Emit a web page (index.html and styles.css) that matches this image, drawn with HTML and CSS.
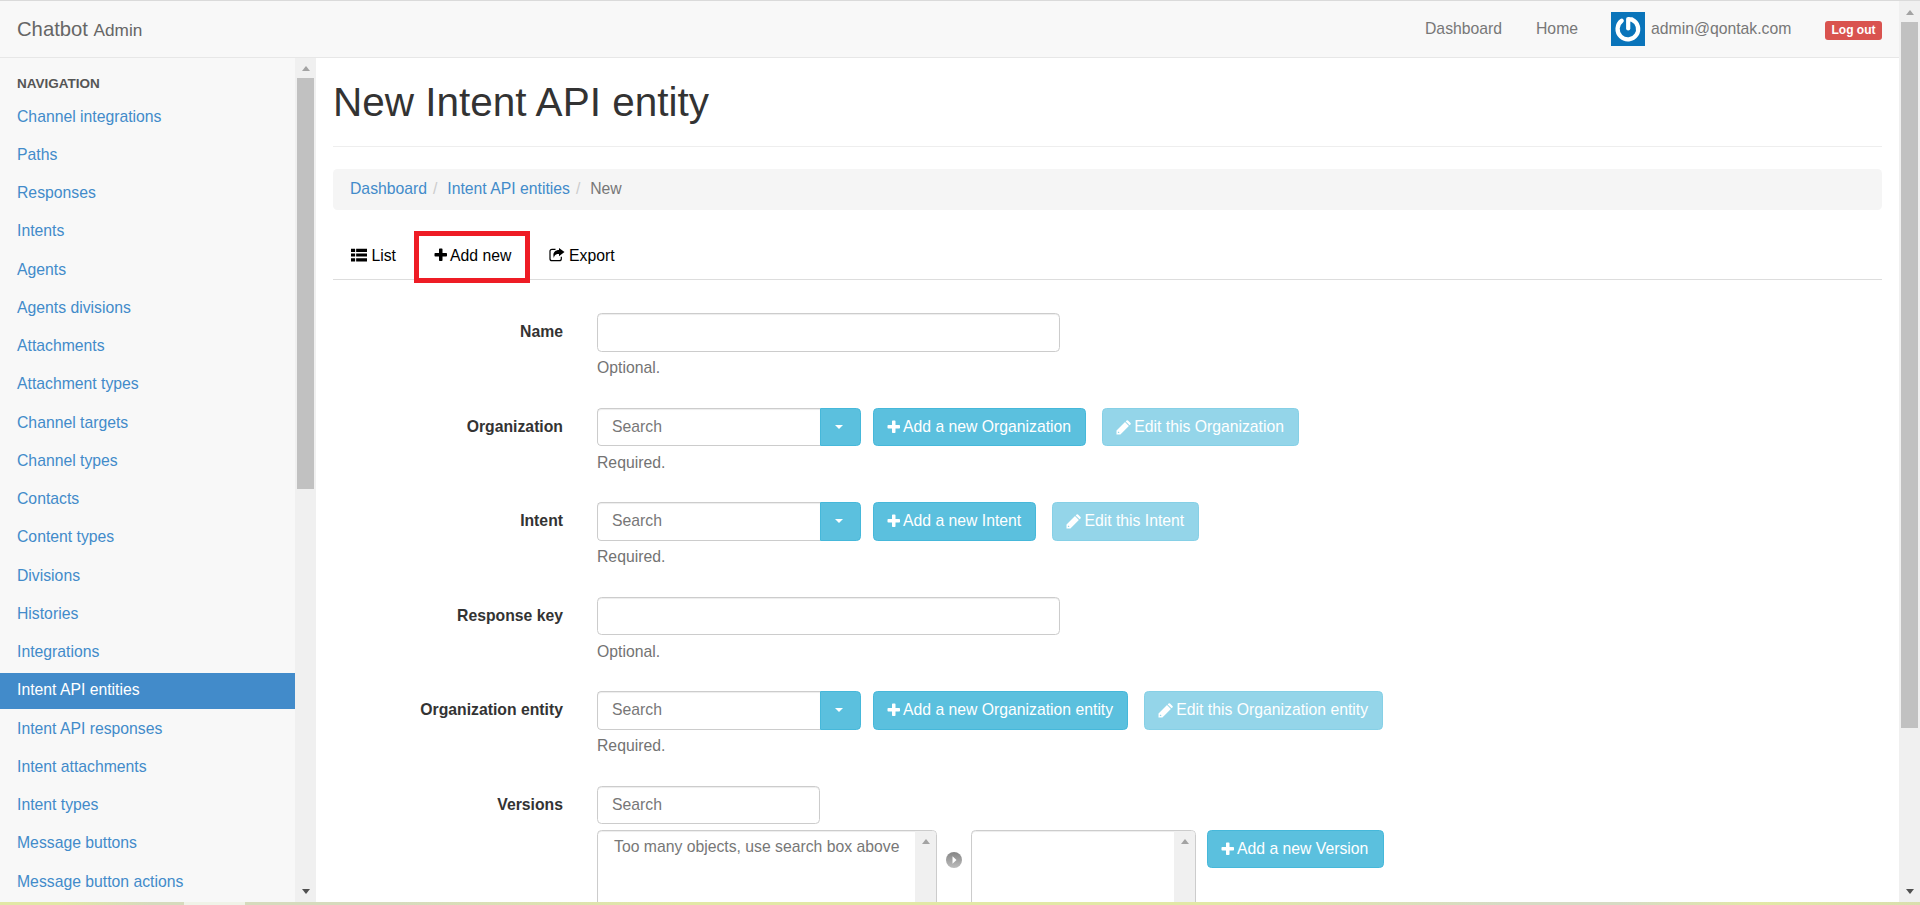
FILE: index.html
```html
<!DOCTYPE html>
<html lang="en">
<head>
<meta charset="utf-8">
<title>New Intent API entity | Chatbot Admin</title>
<link rel="stylesheet" href="styles.css">
</head>
<body>
<svg class="sprite" width="0" height="0">
  <symbol id="plus" viewBox="0 0 14 14"><path d="M5 1.3q0-.8.8-.8h1.9q.8 0 .8.8V5h3.7q.8 0 .8.8v2q0 .8-.8.8H8.5v3.7q0 .8-.8.8H5.8q-.8 0-.8-.8V8.6H1.3Q.5 8.6.5 7.8v-2Q.5 5 1.3 5H5z"/></symbol>
  <symbol id="pencil" viewBox="0 0 15 15"><path fill-rule="evenodd" d="M9 2.100l3.900 3.900L4.400 14.500H.5V10.600zM1.900 11.900v1.200h1.200l.4-.4-1.200-1.200zM9.700 1.400l.9-.9q.7-.6 1.400 0l2.500 2.500q.6.7 0 1.400l-.9.900z"/></symbol>
  <symbol id="list" viewBox="0 0 16 13"><path d="M0 .5h4v3H0zM0 5h4v3H0zM0 9.700h4v3H0zM5 .5h11v3H5zM5 5h11v3H5zM5 9.700h11v3H5z"/></symbol>
  <symbol id="share" viewBox="0 0 16 14"><path d="M10 0L15.500 4 10 8.200V6C7 5.900 5.200 7 4.900 10 3.300 5.500 5.500 2.200 10 2.100z"/><path fill="none" stroke="currentColor" stroke-width="1.200" d="M6.500 1.300H3Q1 1.300 1 3.300v7.400Q1 12.700 3 12.700h7.300Q12.300 12.700 12.300 10.700V8.800"/></symbol>
</svg>
<div class="page">
  <div class="window">
    <header class="navbar">
      <div class="brand">Chatbot <small>Admin</small></div>
      <nav class="topnav">
        <a class="top-dashboard">Dashboard</a>
        <a class="top-home">Home</a>
        <a class="account"><svg class="avatar" viewBox="0 0 34 34"><rect width="34" height="34" fill="#0a74ba"/><path d="M10.700 8.800A10.300 10.300 0 1 0 21.200 7.700" fill="none" stroke="#fff" stroke-width="4.300" stroke-linecap="round"/><path d="M17.200 7v9.500" stroke="#fff" stroke-width="4.200" stroke-linecap="round"/><path d="M17 4.900Q20 4.900 22.200 5.800L20.500 9.800 17 9.300z" fill="#fff"/></svg><span>admin@qontak.com</span></a>
        <a class="logout">Log out</a>
      </nav>
    </header>
    <div class="body">
      <aside class="sidebar">
        <div class="nav-title">NAVIGATION</div>
        <ul class="nav">
          <li>Channel integrations</li><li>Paths</li><li>Responses</li><li>Intents</li><li>Agents</li><li>Agents divisions</li><li>Attachments</li><li>Attachment types</li><li>Channel targets</li><li>Channel types</li><li>Contacts</li><li>Content types</li><li>Divisions</li><li>Histories</li><li>Integrations</li><li class="active">Intent API entities</li><li>Intent API responses</li><li>Intent attachments</li><li>Intent types</li><li>Message buttons</li><li>Message button actions</li>
        </ul>
      </aside>
      <div class="scroll side-scroll"><i class="up"></i><i class="thumb"></i><i class="down"></i></div>
      <main class="content">
        <h1>New Intent API entity</h1>
        <div class="breadcrumb"><a>Dashboard</a><b>/</b><a>Intent API entities</a><b>/</b><span>New</span></div>
        <div class="tabs">
          <a class="tab"><svg width="17" height="14"><use href="#list"/></svg>List</a>
          <a class="tab marked"><svg width="14" height="14"><use href="#plus"/></svg>Add new</a>
          <a class="tab export"><svg width="16" height="14"><use href="#share"/></svg>Export</a>
        </div>
        <form class="form">
          <div class="row"><label>Name</label><div class="field"><div class="line"><div class="input wide"></div></div><p>Optional.</p></div></div>
          <div class="row"><label>Organization</label><div class="field"><div class="line"><div class="input search">Search</div><div class="drop"></div><div class="btn"><svg width="14" height="14"><use href="#plus"/></svg><span>Add a new Organization</span></div><div class="btn off"><svg width="15" height="15"><use href="#pencil"/></svg><span>Edit this Organization</span></div></div><p>Required.</p></div></div>
          <div class="row"><label>Intent</label><div class="field"><div class="line"><div class="input search">Search</div><div class="drop"></div><div class="btn"><svg width="14" height="14"><use href="#plus"/></svg><span>Add a new Intent</span></div><div class="btn off"><svg width="15" height="15"><use href="#pencil"/></svg><span>Edit this Intent</span></div></div><p>Required.</p></div></div>
          <div class="row"><label>Response key</label><div class="field"><div class="line"><div class="input wide"></div></div><p>Optional.</p></div></div>
          <div class="row"><label>Organization entity</label><div class="field"><div class="line"><div class="input search">Search</div><div class="drop"></div><div class="btn"><svg width="14" height="14"><use href="#plus"/></svg><span>Add a new Organization entity</span></div><div class="btn off"><svg width="15" height="15"><use href="#pencil"/></svg><span>Edit this Organization entity</span></div></div><p>Required.</p></div></div>
          <div class="row"><label>Versions</label><div class="field"><div class="line"><div class="input solo">Search</div></div>
            <div class="picker">
              <div class="select available"><span>Too many objects, use search box above</span><div class="scroll"><i class="up"></i></div></div>
              <svg class="choose" width="16" height="16" viewBox="0 0 16 16"><defs><linearGradient id="knob" x2="0" y2="1"><stop stop-color="#858585"/><stop offset="1" stop-color="#bdbdbd"/></linearGradient></defs><circle cx="8" cy="8" r="8" fill="url(#knob)"/><path d="M6.500 4.200L10.500 8l-4 3.800z" fill="#fff"/></svg>
              <div class="select chosen"><div class="scroll"><i class="up"></i></div></div>
              <div class="btn version"><svg width="14" height="14"><use href="#plus"/></svg><span>Add a new Version</span></div>
            </div></div></div>
        </form>
      </main>
    </div>
  </div>
  <div class="scroll page-scroll"><i class="up"></i><i class="thumb"></i><i class="down"></i></div>
</div>
<div class="strip"></div>
</body>
</html>
```
FILE: styles.css
```css
* { box-sizing: border-box; }
body { margin: 0; height: 905px; overflow: hidden; border-top: 1px solid #dadada; background: #fff; color: #333; font: 15.75px/22.5px "Liberation Sans", Arial, sans-serif; }
.sprite { display: block; }
.page { display: flex; height: 901px; }
.window { width: 1899px; display: flex; flex-direction: column; }
.navbar { height: 57px; flex: none; display: flex; justify-content: space-between; padding: 0 17px; background: #f8f8f8; border-bottom: 1px solid #e7e7e7; color: #777; line-height: 56px; }
.brand { font-size: 20.25px; color: #666; }
.brand small { font-size: 17.2px; }
.topnav { display: flex; }
.top-dashboard { width: 111px; }
.top-home { width: 75px; }
.account { width: 214px; display: flex; gap: 6px; }
.avatar { width: 34px; height: 34px; margin-top: 11px; }
.logout { width: 57px; height: 19px; margin-top: 20px; border-radius: 3px; background: #d9534f; color: #fff; font-size: 12px; line-height: 18px; font-weight: bold; text-align: center; }
.body { flex: 1; min-height: 0; display: flex; }
.sidebar { width: 295px; overflow: hidden; background: #f8f8f8; }
.nav-title { padding: 15px 17px 3.600px; font-size: 13.5px; font-weight: bold; color: #555; }
.nav { list-style: none; margin: 0; padding: 0; display: flex; flex-direction: column; gap: 2.250px; }
.nav li { height: 36px; padding: 6.500px 17px; color: #428bca; }
.nav .active { background: #428bca; color: #fff; }
.scroll { width: 21px; display: flex; flex-direction: column; align-items: center; background: #f0f0f0; }
.up, .down { border: 4.500px solid transparent; border-top-width: 0; border-bottom: 5px solid #a3a3a3; }
.up { margin-top: 8px; }
.down { margin: auto 0 8px; border-top: 5px solid #505050; border-bottom: 0; }
.thumb { width: 17px; margin-top: 7px; background: #c1c1c1; }
.side-scroll .thumb { height: 411px; }
.page-scroll .up { margin-top: 9px; }
.page-scroll .thumb { height: 706px; }
.content { flex: 1; padding: 22px 17px 0; overflow: hidden; }
h1 { margin: 0 0 22px; height: 67px; border-bottom: 1px solid #eee; font-size: 40.5px; line-height: 44px; font-weight: 500; }
.breadcrumb { height: 41px; padding: 9px 17px; display: flex; background: #f5f5f5; border-radius: 4.500px; color: #777; }
.breadcrumb a { color: #428bca; }
.breadcrumb b { width: 20.250px; padding-left: 6px; color: #ccc; font-weight: normal; }
.tabs { height: 49px; margin-top: 21px; display: flex; border-bottom: 1px solid #ddd; color: #000; }
.tab { display: flex; gap: 4px; height: 52px; padding: 14px 18px 0; }
.tab svg { margin-top: 3px; fill: currentColor; }
.tab:first-child { width: 81px; }
.marked { width: 116px; border: 5px solid #ee1c25; padding: 9px 0 0 15px; gap: 2px; }
.export { padding-left: 19px; }
.form { padding-top: 33.250px; }
.row { height: 94.500px; display: flex; }
label { width: 230px; padding-top: 7.750px; text-align: right; font-weight: bold; }
.field { margin-left: 34px; }
.line { display: flex; height: 38.250px; }
.input { border: 1px solid #ccc; border-radius: 4.500px; padding: 6.750px 14px; color: #777; box-shadow: inset 0 1px 1px rgba(0,0,0,.075); }
.wide { width: 463px; }
.search { width: 223px; border-radius: 4.500px 0 0 4.500px; border-right: 0; }
.solo { width: 223px; }
.drop { width: 41px; margin-right: 12px; display: grid; place-items: center; background: #5bc0de; border: 1px solid #46b8da; border-radius: 0 4.500px 4.500px 0; }
.drop::after { content: ""; margin-left: -3px; border: 4.500px solid transparent; border-top-color: #fff; border-bottom: 0; }
.btn { height: 38.250px; padding: 6.750px 13.500px 6.750px 13px; display: flex; gap: 2px; margin-right: 16px; white-space: nowrap; background: #5bc0de; border: 1px solid #46b8da; border-radius: 4.500px; color: #fff; }
.btn svg { margin-top: 4px; fill: #fff; }
.btn span { padding-right: .4px; }
.off { opacity: .65; gap: 3.300px; }
.version { width: 177px; }
.row p { margin: 5.750px 0 0; color: #737373; }
.picker { display: flex; height: 130px; margin-top: 5.750px; }
.select { display: flex; border: 1px solid #ccc; border-radius: 4.500px; overflow: hidden; color: #777; box-shadow: inset 0 1px 1px rgba(0,0,0,.075); }
.select span { padding: 5px 0 0 16px; white-space: nowrap; }
.select .scroll { margin-left: auto; }
.available { width: 340px; }
.chosen { width: 225px; margin-right: 11px; }
.choose { margin: 22px 9px 0; }
.strip { height: 3px; background: linear-gradient(90deg, transparent 184px, #f0f3e8 184px 245px, transparent 245px), linear-gradient(90deg, #e2e8a6 0, #e2e8a6 60px, #d6dbbd 150px, #d6dbbd 400px, #e2e8a6 680px, #e2e8a6 1230px, #d6dbc4 1500px, #d6dbc4 1620px, #e2e8a6 1760px, #d9dfae 1920px); }
```
